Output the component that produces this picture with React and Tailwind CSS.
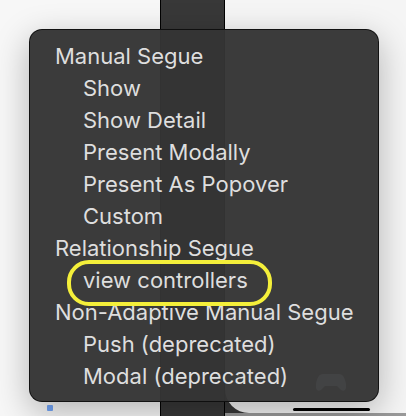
import React from "react";

const groups = [
	{ title: "Manual Segue", items: ["Show", "Show Detail", "Present Modally", "Present As Popover", "Custom"] },
	{ title: "Relationship Segue", items: ["view controllers"] },
	{ title: "Non-Adaptive Manual Segue", items: ["Push (deprecated)", "Modal (deprecated)"] },
];

function Backdrop() {
	// storyboard canvas behind the popup menu
	return (
		<div className="absolute inset-0 flex bg-[#f7f7f7]">
			<div className="flex w-[160px] flex-col items-start justify-end pb-[5px] pl-[47px]">
				<div className="h-[6px] w-[6px] rounded-[1px] bg-[#3b82f6]/70" />
			</div>
			<div className="w-[65px] border-x border-black bg-[#383838]" />
			<div className="flex flex-1 flex-col bg-[#383838]">
				<div className="flex flex-1 items-end rounded-bl-[24px] bg-[#f5f5f5] pb-[2px] pl-[68px]">
					<div className="h-[3px] w-[77px] rounded-full bg-black" />
				</div>
				<div className="h-[3px] bg-[#9a9a9a]" />
			</div>
		</div>
	);
}

export default function App() {
	return (
		<div className="relative h-[416px] w-[406px] overflow-hidden" style={{ fontFamily: "Inter, 'Noto Sans', sans-serif" }}>
			<Backdrop />
			<div className="absolute left-[29px] top-[29px] flex h-[373px] w-[350px] flex-col rounded-[13px] border border-black/70 bg-[rgba(52,52,52,0.965)] pt-[10px] shadow-[0_10px_34px_rgba(0,0,0,0.28)]">
				<svg className="absolute left-[286px] top-[341px] opacity-[0.08]" width="30" height="22" viewBox="0 0 30 22">
					<path d="M7 3h16c4 0 6 4 7 10s-2 8-5 6l-4-4H9l-4 4c-3 2-6 0-5-6S3 3 7 3z" fill="#9ca3af" />
				</svg>
				{groups.map((g) => (
					<div key={g.title} className="flex flex-col">
						<div className="pl-[25px] text-[22px] leading-[32px] text-[#dedede]">{g.title}</div>
						{g.items.map((it) => (
							<div key={it} className="relative pl-[53px] text-[22px] leading-[32px] text-[#dedede]">
								{it}
								{it === "view controllers" && (
									<div className="absolute left-[37px] top-[-4px] h-[46px] w-[205px] rounded-[22px] border-4 border-[#f4ef3a]" />
								)}
							</div>
						))}
					</div>
				))}
			</div>
		</div>
	);
}
